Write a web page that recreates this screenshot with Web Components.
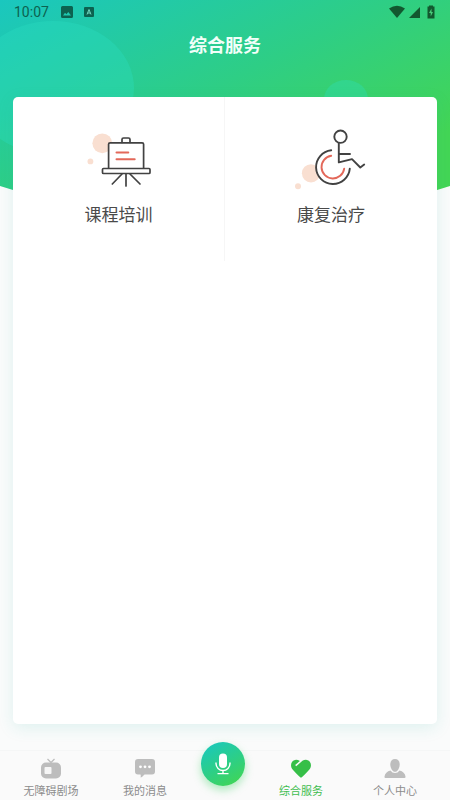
<!DOCTYPE html>
<html lang="zh-CN">
<head>
<meta charset="utf-8">
<meta name="viewport" content="width=device-width, initial-scale=1">
<title>综合服务</title>
<style>
html, body { margin: 0; }
body { background: #fafbfb; font-family: Roboto, "Noto Sans CJK SC", sans-serif; }
</style>
</head>
<body>
<services-page></services-page>

<template id="page-tpl">
<style>
:host { display: flex; flex-direction: column; min-height: 100vh; position: relative; box-sizing: border-box; }
main { flex: 1; display: flex; padding: 0 13px 26px; }
main service-card { flex: 1; }
</style>
<header-backdrop></header-backdrop>
<status-bar></status-bar>
<page-title>综合服务</page-title>
<main>
<service-card>
<service-item>
<svg slot="icon" width="84" height="64" viewBox="77 126 84 64" fill="none" stroke="#424242" stroke-width="1.7" stroke-linejoin="round" stroke-linecap="round" aria-hidden="true">
<circle cx="102.3" cy="143.3" r="9.9" fill="#f9dfd1" stroke="none"/><circle cx="90.4" cy="161.4" r="2.9" fill="#f9dfd1" stroke="none"/>
<path d="M108.6 168V144.3Q108.6 142.8 110.1 142.8H142.1Q143.6 142.8 143.6 144.3V168" fill="#fff"/>
<path d="M122 142.3V139.5Q122 138 123.5 138H128.5Q130 138 130 139.5V142.3"/>
<rect x="102.5" y="168.5" width="47.5" height="5" rx="1" fill="#fff"/>
<path d="M122 174 112.3 184M126 174V186M130 174 140 184"/>
<path d="M116.5 152.6H128.3M116.5 159.2H134.7" stroke="#e3685a" stroke-width="2"/>
</svg>
课程培训
</service-item>
<service-item>
<svg slot="icon" width="84" height="64" viewBox="289 126 84 64" fill="none" stroke="#424242" stroke-width="1.9" stroke-linejoin="round" stroke-linecap="round" aria-hidden="true">
<circle cx="311" cy="173.3" r="9.1" fill="#f9dfd1" stroke="none"/><circle cx="298" cy="186.3" r="3" fill="#f9dfd1" stroke="none"/>
<path d="M331.2 150.3A16.9 16.9 0 1 0 349.8 168.7" fill="#fff"/>
<path d="M331.2 155.8A11.4 11.4 0 1 0 344.2 168.7" stroke="#e3685a"/>
<circle cx="340.5" cy="136.7" r="6.2"/>
<path d="M338.8 143V162.4L352 159.2 360.3 167.5 364.2 164.5M339 154H350"/>
</svg>
康复治疗
</service-item>
</service-card>
</main>
<tab-bar></tab-bar>
</template>

<template id="backdrop-tpl">
<style>
:host { display: block; position: absolute; top: 0; left: 0; width: 100%; z-index: -1; }
svg { display: block; width: 100%; height: 230px; }
</style>
<svg viewBox="0 0 450 230" preserveAspectRatio="none" aria-hidden="true">
<defs>
<linearGradient id="sky" gradientUnits="userSpaceOnUse" x1="0" y1="0" x2="142" y2="284">
<stop offset="0" stop-color="#1ac7bf"/><stop offset=".55" stop-color="#2ece85"/><stop offset="1" stop-color="#43d555"/>
</linearGradient>
</defs>
<path d="M0 0H450V186Q225 260 0 186Z" fill="url(#sky)"/>
<ellipse cx="53" cy="88" rx="81" ry="67" fill="#2be0c5" fill-opacity=".32"/>
<ellipse cx="346" cy="99" rx="22" ry="19" fill="#2be0c5" fill-opacity=".32"/>
</svg>
</template>

<template id="status-tpl">
<style>
:host { display: flex; align-items: center; height: 24px; padding: 0 14px; color: #0c6250; font-size: 14px; line-height: 26px; }
.left, .right { display: flex; align-items: center; }
.left { gap: 12px; flex: 1; }
.notes { display: flex; align-items: center; gap: 11px; }
.right { gap: 4px; color: #12582f; }
svg { display: block; }
</style>
<div class="left"><span>10:07</span>
<span class="notes">
<svg width="12" height="12" viewBox="0 0 12 12" aria-hidden="true"><path fill="currentColor" fill-rule="evenodd" d="M1.500 0h9Q12 0 12 1.500v9Q12 12 10.500 12h-9Q0 12 0 10.500v-9Q0 0 1.500 0ZM2 9.500h8L7.300 6 5.400 8.300 4 6.800Z"/></svg>
<svg width="10" height="12" viewBox="0 0 10 12" aria-hidden="true"><rect y="1" width="10" height="10" rx="1" fill="currentColor"/><path d="M3 8.500 5 3.500 7 8.500M3.700 7H6.300" fill="none" stroke="#72d8c0"/></svg>
</span></div>
<div class="right">
<svg width="16" height="14" viewBox="0 0 16 14" aria-hidden="true"><path fill="currentColor" d="M0 3.500Q8-2 16 3.500L8 13Z"/></svg>
<svg width="11" height="14" viewBox="0 0 11 14" aria-hidden="true"><path fill="currentColor" d="M11 2V13H0Z"/></svg>
<svg width="12" height="14" viewBox="0 0 12 14" aria-hidden="true"><path fill="currentColor" d="M5 1.500V.5H9V1.500H10.500V13.500H3.500V1.500Z"/><path fill="#48cc79" d="M7.500 3.500 5 8H6.700V11.500L9 7H7.500Z"/></svg>
</div>
</template>

<template id="title-tpl">
<style>
:host { display: block; }
h1 { margin: 0; padding: 9px 0 38px; text-align: center; font-size: 18px; line-height: 26px; font-weight: 700; color: #f2fff9; }
</style>
<h1><slot></slot></h1>
</template>

<template id="card-tpl">
<style>
:host { display: block; background: #fff; border-radius: 5px; box-shadow: 0 4px 16px rgba(40, 180, 165, .13); }
.grid { display: grid; grid-template-columns: 1fr 1fr; }
::slotted(service-item:first-child) { border-right: 1px solid #f6f6f6; }
</style>
<div class="grid"><slot></slot></div>
</template>

<template id="item-tpl">
<style>
:host { display: block; box-sizing: border-box; height: 164px; }
button { width: 100%; height: 100%; margin: 0; border: 0; padding: 29px 0 0; background: none; font: inherit; font-size: 17px; line-height: 24px; color: #4a4a4a; display: flex; flex-direction: column; align-items: center; gap: 13px; cursor: pointer; }
</style>
<button type="button"><slot name="icon"></slot><span><slot></slot></span></button>
</template>

<template id="tabs-tpl">
<style>
:host { display: block; }
nav { display: grid; grid-template-columns: 1fr 1fr 62px 1fr 1fr; height: 50px; padding: 0 8px 0 4px; box-sizing: border-box; background: #fafafa; border-top: 1px solid #f5f6f6; }
.mic { justify-self: center; width: 44px; height: 44px; margin-top: -9px; padding: 0; border: 0; border-radius: 50%; background: linear-gradient(150deg, #17c7c4, #2ecf83 55%, #45d74b); box-shadow: 0 4px 8px rgba(60, 210, 100, .4); display: grid; place-items: center; cursor: pointer; }
svg { display: block; }
</style>
<nav>
<tab-item>
<svg slot="icon" width="22" height="22" viewBox="0 0 22 22" aria-hidden="true"><path d="M7.500 1 11 4.500 14.500 1" fill="none" stroke="#bdbdbd" stroke-width="1.300"/><rect x="1" y="4.500" width="20" height="16" rx="5" fill="#bdbdbd"/><rect x="4.500" y="9" width="7" height="7" rx="1" fill="#f6f6f6"/></svg>
无障碍剧场</tab-item>
<tab-item>
<svg slot="icon" width="22" height="22" viewBox="0 0 22 22" aria-hidden="true"><path d="M4 1H18Q21 1 21 4V13.500Q21 16.500 18 16.500H10.500Q8.500 19 6.500 19.500 7 18 6.500 16.500H4Q1 16.500 1 13.500V4Q1 1 4 1Z" fill="#bdbdbd"/><circle cx="6.500" cy="8.800" r="1.400" fill="#fff"/><circle cx="11" cy="8.800" r="1.400" fill="#fff"/><circle cx="15.500" cy="8.800" r="1.400" fill="#fff"/></svg>
我的消息</tab-item>
<button class="mic" type="button" aria-label="语音">
<svg width="18" height="24" viewBox="0 0 18 24" aria-hidden="true"><rect x="5" y="1.500" width="8" height="14.500" rx="4" fill="#fff"/><path d="M2 10.500V11.500A7 7 0 0 0 16 11.500V10.500M9 18.500V21.500M3.500 21.600H14.500" fill="none" stroke="#fff" stroke-width="1.400"/></svg>
</button>
<tab-item active>
<svg slot="icon" width="22" height="22" viewBox="0 0 22 22" aria-hidden="true"><path d="M11 19.700Q9.500 19.200 2.600 11.500C-.6 7.500 1.400 2 6 1.700 8.400 1.600 10 2.800 11 4 12 2.800 13.600 1.600 16 1.700 20.600 2 22.600 7.500 19.400 11.500Q12.500 19.200 11 19.700Z" fill="#36bf48"/><path d="M10.900 3.100 5.700 7.600" stroke="#fafafa" stroke-width="1.500"/></svg>
综合服务</tab-item>
<tab-item>
<svg slot="icon" width="22" height="22" viewBox="0 0 22 22" aria-hidden="true"><path d="M11 1C8.200 1 6.300 3 6.300 6.500S8.500 13.800 11 13.800 15.700 10 15.700 6.500 13.800 1 11 1Z" fill="#bdbdbd"/><path d="M6.500 12.500Q1.300 13.800.5 18.500.3 20 1.500 20H20.500Q21.700 20 21.500 18.500 20.700 13.800 15.500 12.500 13.800 15 11 15T6.500 12.500Z" fill="#bdbdbd"/></svg>
个人中心</tab-item>
</nav>
</template>

<template id="tab-tpl">
<style>
:host { display: block; --tone: #8c8c8c; }
:host([active]) { --tone: #40bd50; }
a { display: flex; flex-direction: column; align-items: center; padding-top: 7px; gap: 4px; color: var(--tone); text-decoration: none; font-size: 11px; line-height: 16px; white-space: nowrap; }
</style>
<a href="#"><slot name="icon"></slot><span><slot></slot></span></a>
</template>

<script>
const register = (name, templateId) => {
  customElements.define(name, class extends HTMLElement {
    constructor() {
      super();
      this.attachShadow({ mode: "open" })
        .append(document.getElementById(templateId).content.cloneNode(true));
    }
  });
};
register("header-backdrop", "backdrop-tpl");
register("status-bar", "status-tpl");
register("page-title", "title-tpl");
register("service-card", "card-tpl");
register("service-item", "item-tpl");
register("tab-item", "tab-tpl");
register("tab-bar", "tabs-tpl");
register("services-page", "page-tpl");
</script>
</body>
</html>
